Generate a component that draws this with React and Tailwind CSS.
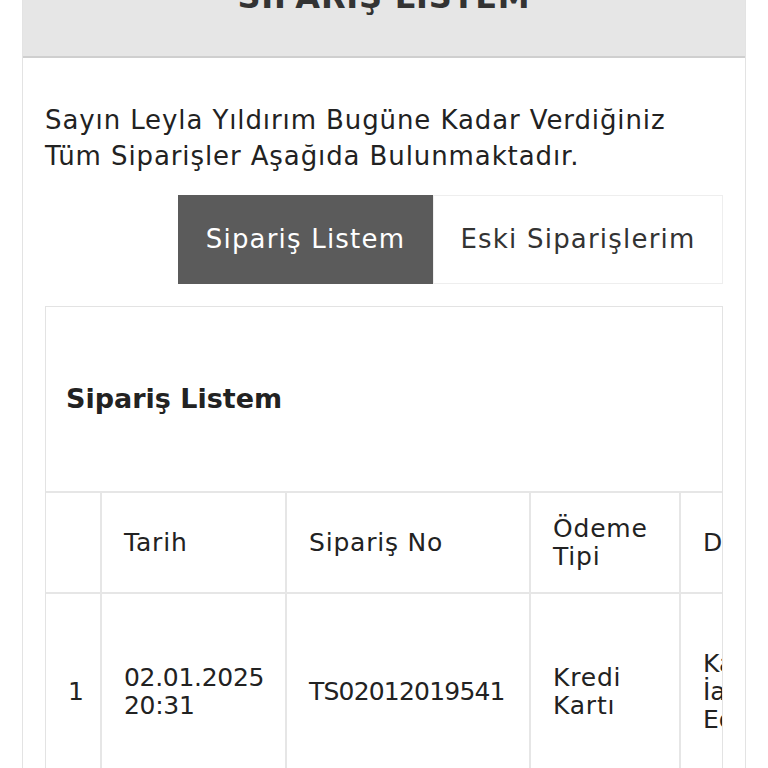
import React from 'react';

const font = { fontFamily: '"DejaVu Sans", "Noto Sans", sans-serif' };

const columns = [
    { key: 'no', label: '', w: 'w-[55px]' },
    { key: 'date', label: 'Tarih', w: 'w-[185px]' },
    { key: 'code', label: 'Sipariş No', w: 'w-[244px]' },
    { key: 'pay', label: 'Ödeme Tipi', w: 'w-[150px]' },
    { key: 'status', label: 'Durum', w: 'w-[120px]' },
];

const orders = [
    { no: '1', date: '02.01.2025 20:31', code: 'TS02012019541', pay: 'Kredi Kartı', status: 'Kargo İade Edildi' },
];

const App = () => {
    return (
        <div className="bg-white min-h-screen overflow-hidden text-[#222]" style={font}>
            <div className="mx-[22px] -mt-[63px] border border-[#e3e3e3] bg-white">
                {/* HEADER */}
                <div className="h-[120px] bg-[#e6e6e6] border-b-2 border-[#cfcfcf] flex items-center justify-center">
                    <h1 className="text-[32px] font-semibold uppercase text-[#333] tracking-wide">SİPARİŞ LİSTEM</h1>
                </div>

                <div className="px-[22px] pt-[44px] pb-10">
                    <p className="text-[26px] leading-[36px] tracking-[0.9px]">
                        Sayın Leyla Yıldırım Bugüne Kadar Verdiğiniz Tüm Siparişler Aşağıda Bulunmaktadır.
                    </p>

                    {/* TABS */}
                    <div className="flex justify-end mt-[21px] tracking-[1.2px]">
                        <button className="w-[255px] h-[89px] bg-[#5b5b5b] text-white text-[26px]">Sipariş Listem</button>
                        <button className="w-[290px] h-[89px] bg-white border border-[#eeeeee] text-[#333] text-[26px]">Eski Siparişlerim</button>
                    </div>

                    {/* LIST PANEL */}
                    <div className="mt-[22px] border border-[#e3e3e3] overflow-hidden">
                        <div className="h-[186px] flex items-center px-[20px] border-b-2 border-[#e6e6e6]">
                            <h2 className="text-[27px] font-bold text-[#222]">Sipariş Listem</h2>
                        </div>
                        <table className="w-[754px] table-fixed border-collapse text-[25px] leading-[28px]">
                            <thead>
                                <tr className="h-[100px] border-b-2 border-[#e6e6e6]">
                                    {columns.map((c) => (
                                        <th key={c.key} className={`${c.w} font-normal text-left align-middle pl-[22px] pr-[12px] pt-[1px] tracking-[0.8px] border-r-2 border-[#e6e6e6]`}>
                                            {c.label}
                                        </th>
                                    ))}
                                </tr>
                            </thead>
                            <tbody>
                                {orders.map((o) => (
                                    <tr key={o.no} className="h-[196px]">
                                        <td className="pl-[22px] border-r-2 border-[#e6e6e6]">{o.no}</td>
                                        <td className="pl-[22px] border-r-2 border-[#e6e6e6] tracking-[-0.3px]">{o.date}</td>
                                        <td className="pl-[22px] border-r-2 border-[#e6e6e6] tracking-[-0.8px]">{o.code}</td>
                                        <td className="pl-[22px] pr-[12px] border-r-2 border-[#e6e6e6] tracking-[0.8px]">{o.pay}</td>
                                        <td className="pl-[22px] pr-[60px] border-r-2 border-[#e6e6e6]">{o.status}</td>
                                    </tr>
                                ))}
                            </tbody>
                        </table>
                    </div>
                </div>
            </div>
        </div>
    );
};

export default App;
